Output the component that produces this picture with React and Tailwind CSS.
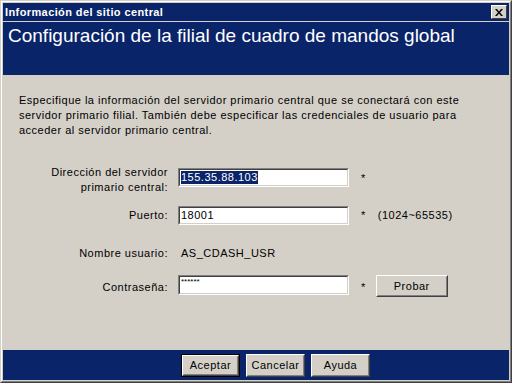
import React from "react";

const font = { fontFamily: '"Liberation Sans", Arial, sans-serif' };

const Sunken = ({ children, className = "" }) => (
  <div className={`border border-t-[#808080] border-l-[#808080] border-b-white border-r-white ${className}`}>
    <div className="h-full border border-t-[#404040] border-l-[#404040] border-b-[#d4d0c8] border-r-[#d4d0c8] bg-white flex items-center pl-px text-[11px] text-black overflow-hidden">
      {children}
    </div>
  </div>
);

const Button = ({ children, isDefault, className = "" }) => {
  const inner = (
    <div className="h-full border border-t-white border-l-white border-b-[#404040] border-r-[#404040]">
      <div className="h-full border border-t-[#d4d0c8] border-l-[#d4d0c8] border-b-[#808080] border-r-[#808080] bg-[#d4d0c8] flex items-center justify-center text-[11px] tracking-[0.5px] text-black">
        {children}
      </div>
    </div>
  );
  return isDefault ? (
    <div className={`border border-black ${className}`}>{inner}</div>
  ) : (
    <div className={className}>{inner}</div>
  );
};

export default function App() {
  return (
    <div style={font} className="w-[512px] h-[383px] border border-t-[#d4d0c8] border-l-[#d4d0c8] border-b-[#404040] border-r-[#404040]">
      <div className="h-full border border-t-white border-l-white border-b-[#808080] border-r-[#808080] bg-[#d4d0c8] p-px flex flex-col">
        {/* title bar */}
        <div className="h-[18px] bg-[#0a246a] flex items-center justify-between pl-[2px] pr-[2px] shrink-0">
          <span className="text-white font-bold text-[11px] tracking-[0.4px] leading-none">Información del sitio central</span>
          <div className="w-[16px] h-[14px] border border-t-white border-l-white border-b-[#404040] border-r-[#404040] bg-[#d4d0c8] flex items-center justify-center">
            <svg width="8" height="7" viewBox="0 0 8 7">
              <path d="M0 0h2l2 2.5L6 0h2L5 3.5 8 7H6L4 4.5 2 7H0l3-3.5z" fill="black" />
            </svg>
          </div>
        </div>
        {/* header */}
        <div className="mt-px h-[53px] bg-[#0a246a] shrink-0 pl-[5px] pt-[2px]">
          <h1 className="text-white text-[19px] leading-[24px]">Configuración de la filial de cuadro de mandos global</h1>
        </div>
        {/* body */}
        <div className="flex-1 pl-[16px] pt-[18px] text-[11px] tracking-[0.5px] text-black">
          <p className="leading-[15px] w-[452px]">
            Especifique la información del servidor primario central que se conectará con este servidor primario filial. También debe especificar las credenciales de usuario para acceder al servidor primario central.
          </p>

          <div className="mt-[27px] flex items-start">
            <div className="w-[149px] text-right leading-[15px]">
              Dirección del servidor
              <br />
              primario central:
            </div>
            <Sunken className="ml-[10px] mt-[3px] w-[171px] h-[19px]">
              <span className="bg-[#0a246a] text-white leading-[13px]">155.35.88.103</span>
            </Sunken>
            <span className="ml-[12px] mt-[5px]">*</span>
          </div>

          <div className="mt-[11px] flex items-center h-[19px]">
            <div className="w-[149px] text-right">Puerto:</div>
            <Sunken className="ml-[10px] w-[171px] h-[19px]">18001</Sunken>
            <span className="ml-[12px]">*</span>
            <span className="ml-[12px]">(1024~65535)</span>
          </div>

          <div className="mt-[19px] flex items-center h-[19px]">
            <div className="w-[149px] text-right">Nombre usuario:</div>
            <span className="ml-[13px]">AS_CDASH_USR</span>
          </div>

          <div className="mt-[12px] flex items-start h-[22px]">
            <div className="w-[149px] text-right mt-[4px]">Contraseña:</div>
            <Sunken className="ml-[10px] w-[171px] h-[20px] items-start">
              <span className="text-[8px] leading-[8px] tracking-normal self-start mt-px">******</span>
            </Sunken>
            <span className="ml-[12px] mt-[4px]">*</span>
            <Button className="ml-[10px] w-[72px] h-[22px]">Probar</Button>
          </div>
        </div>
        {/* bottom bar */}
        <div className="h-[30px] bg-[#0a246a] shrink-0 flex items-start pt-[4px] pl-[178px] gap-[6px]">
          <Button isDefault className="w-[59px] h-[23px]">Aceptar</Button>
          <Button className="w-[59px] h-[23px]">Cancelar</Button>
          <Button className="w-[59px] h-[23px]">Ayuda</Button>
        </div>
      </div>
    </div>
  );
}
